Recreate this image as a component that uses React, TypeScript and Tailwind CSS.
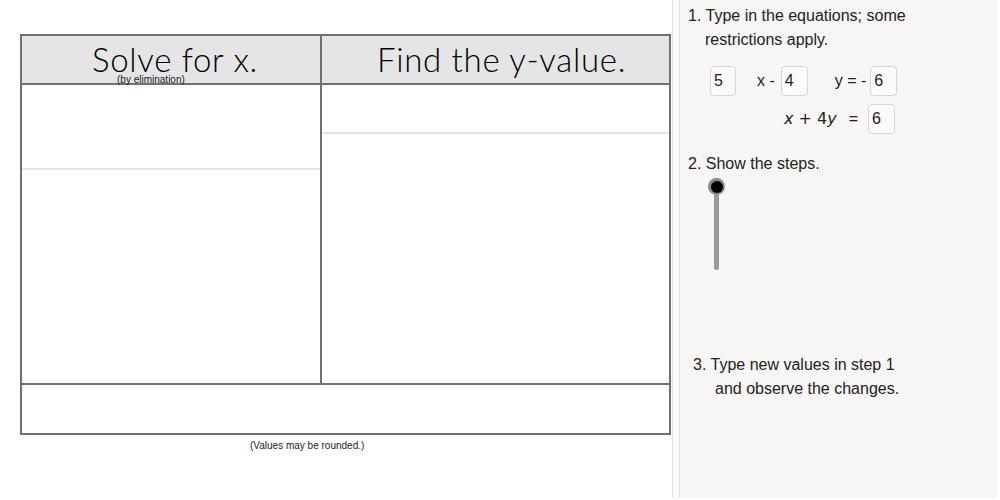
const sans = { fontFamily: '"Liberation Sans", Arial, sans-serif' };

function Box({ v, w = "w-[27px]" }: { v: string; w?: string }) {
  return (
    <div className={`${w} h-[30px] rounded-[4px] border border-[#d6d6d6] bg-[#fafafa] pl-[3px] text-[16px] leading-[28px] text-[#222]`}>
      {v}
    </div>
  );
}

export default function App() {
  return (
    <div className="flex w-[1000px] h-[500px] bg-white overflow-hidden">
      {/* Graphics view */}
      <div className="w-[672px] h-full pt-[34px] pl-[20px]">
        <div className="w-[651px] border-2 border-[#717171]">
          <div className="flex h-[49px] bg-[#e5e5e5] border-b-2 border-[#717171]" style={{ fontFamily: 'Lato, "Open Sans", sans-serif' }}>
            <div className="relative w-[300px] border-r-2 border-[#717171] flex justify-center">
              <span className="text-[33px] leading-[46px] font-light text-black tracking-[0.7px] ml-[8px]">Solve for x.</span>
              <span className="absolute left-[95px] top-[39px] text-[10px] leading-[10px] text-[#222]" style={sans}>(by elimination)</span>
            </div>
            <div className="flex-1 flex justify-center">
              <span className="text-[33px] leading-[47px] font-light text-black tracking-[0.7px] ml-[12px]">Find the y-value.</span>
            </div>
          </div>
          <div className="flex h-[300px] border-b-2 border-[#717171]">
            <div className="w-[300px] border-r-2 border-[#717171]">
              <div className="h-[85px] border-b-2 border-[#e6e6e6]" />
            </div>
            <div className="flex-1">
              <div className="h-[49px] border-b-2 border-[#e6e6e6]" />
            </div>
          </div>
          <div className="h-[48px]" />
        </div>
        <div className="w-[651px] pt-[5px] pl-[230px] text-left text-[10px] leading-[12px] text-[#222]" style={sans}>
          (Values may be rounded.)
        </div>
      </div>

      {/* divider */}
      <div className="w-[8px] h-[498px] bg-[#fafafa] border-l border-r border-[#e2e2e2]" />

      {/* Algebra / controls panel */}
      <div className="w-[317px] h-[498px] bg-[#f7f6f5] text-[16px] leading-[24px] text-[#222]" style={sans}>
        <div className="pl-[8px] pt-[4px]">
          <div>1. Type in the equations; some</div>
          <div className="ml-[17px]">restrictions apply.</div>
        </div>

        <div className="flex items-center ml-[30px] mt-[14px] h-[30px]">
          <Box v="5" w="w-[26px]" />
          <span className="ml-[21px]">x -</span>
          <div className="ml-[6px]"><Box v="4" /></div>
          <span className="ml-[27px]">y = -</span>
          <div className="ml-[4px]"><Box v="6" /></div>
        </div>

        <div className="flex items-center ml-[104px] mt-[8px] h-[30px]">
          <span style={{ fontFamily: '"DejaVu Sans", sans-serif' }} className="text-[16px]">
            <i className="font-light">x</i> + 4<i className="font-light">y</i>
          </span>
          <span className="ml-[12px]">=</span>
          <div className="ml-[10px]"><Box v="6" /></div>
        </div>

        <div className="pl-[8px] mt-[18px]">2. Show the steps.</div>

        <div className="relative ml-[28px] mt-[2px] w-[16px] h-[95px]">
          <div className="absolute left-[5.5px] top-[8px] w-[5px] h-[84px] rounded-full bg-[#9a9a9a]" />
          <div className="absolute left-0 top-0 w-[17px] h-[17px] rounded-full bg-[#8a8a8a] flex items-center justify-center">
            <div className="w-[12px] h-[12px] rounded-full bg-black" />
          </div>
        </div>

        <div className="pl-[13px] mt-[80px]">3. Type new values in step 1</div>
        <div className="pl-[35px]">and observe the changes.</div>
      </div>
    </div>
  );
}
